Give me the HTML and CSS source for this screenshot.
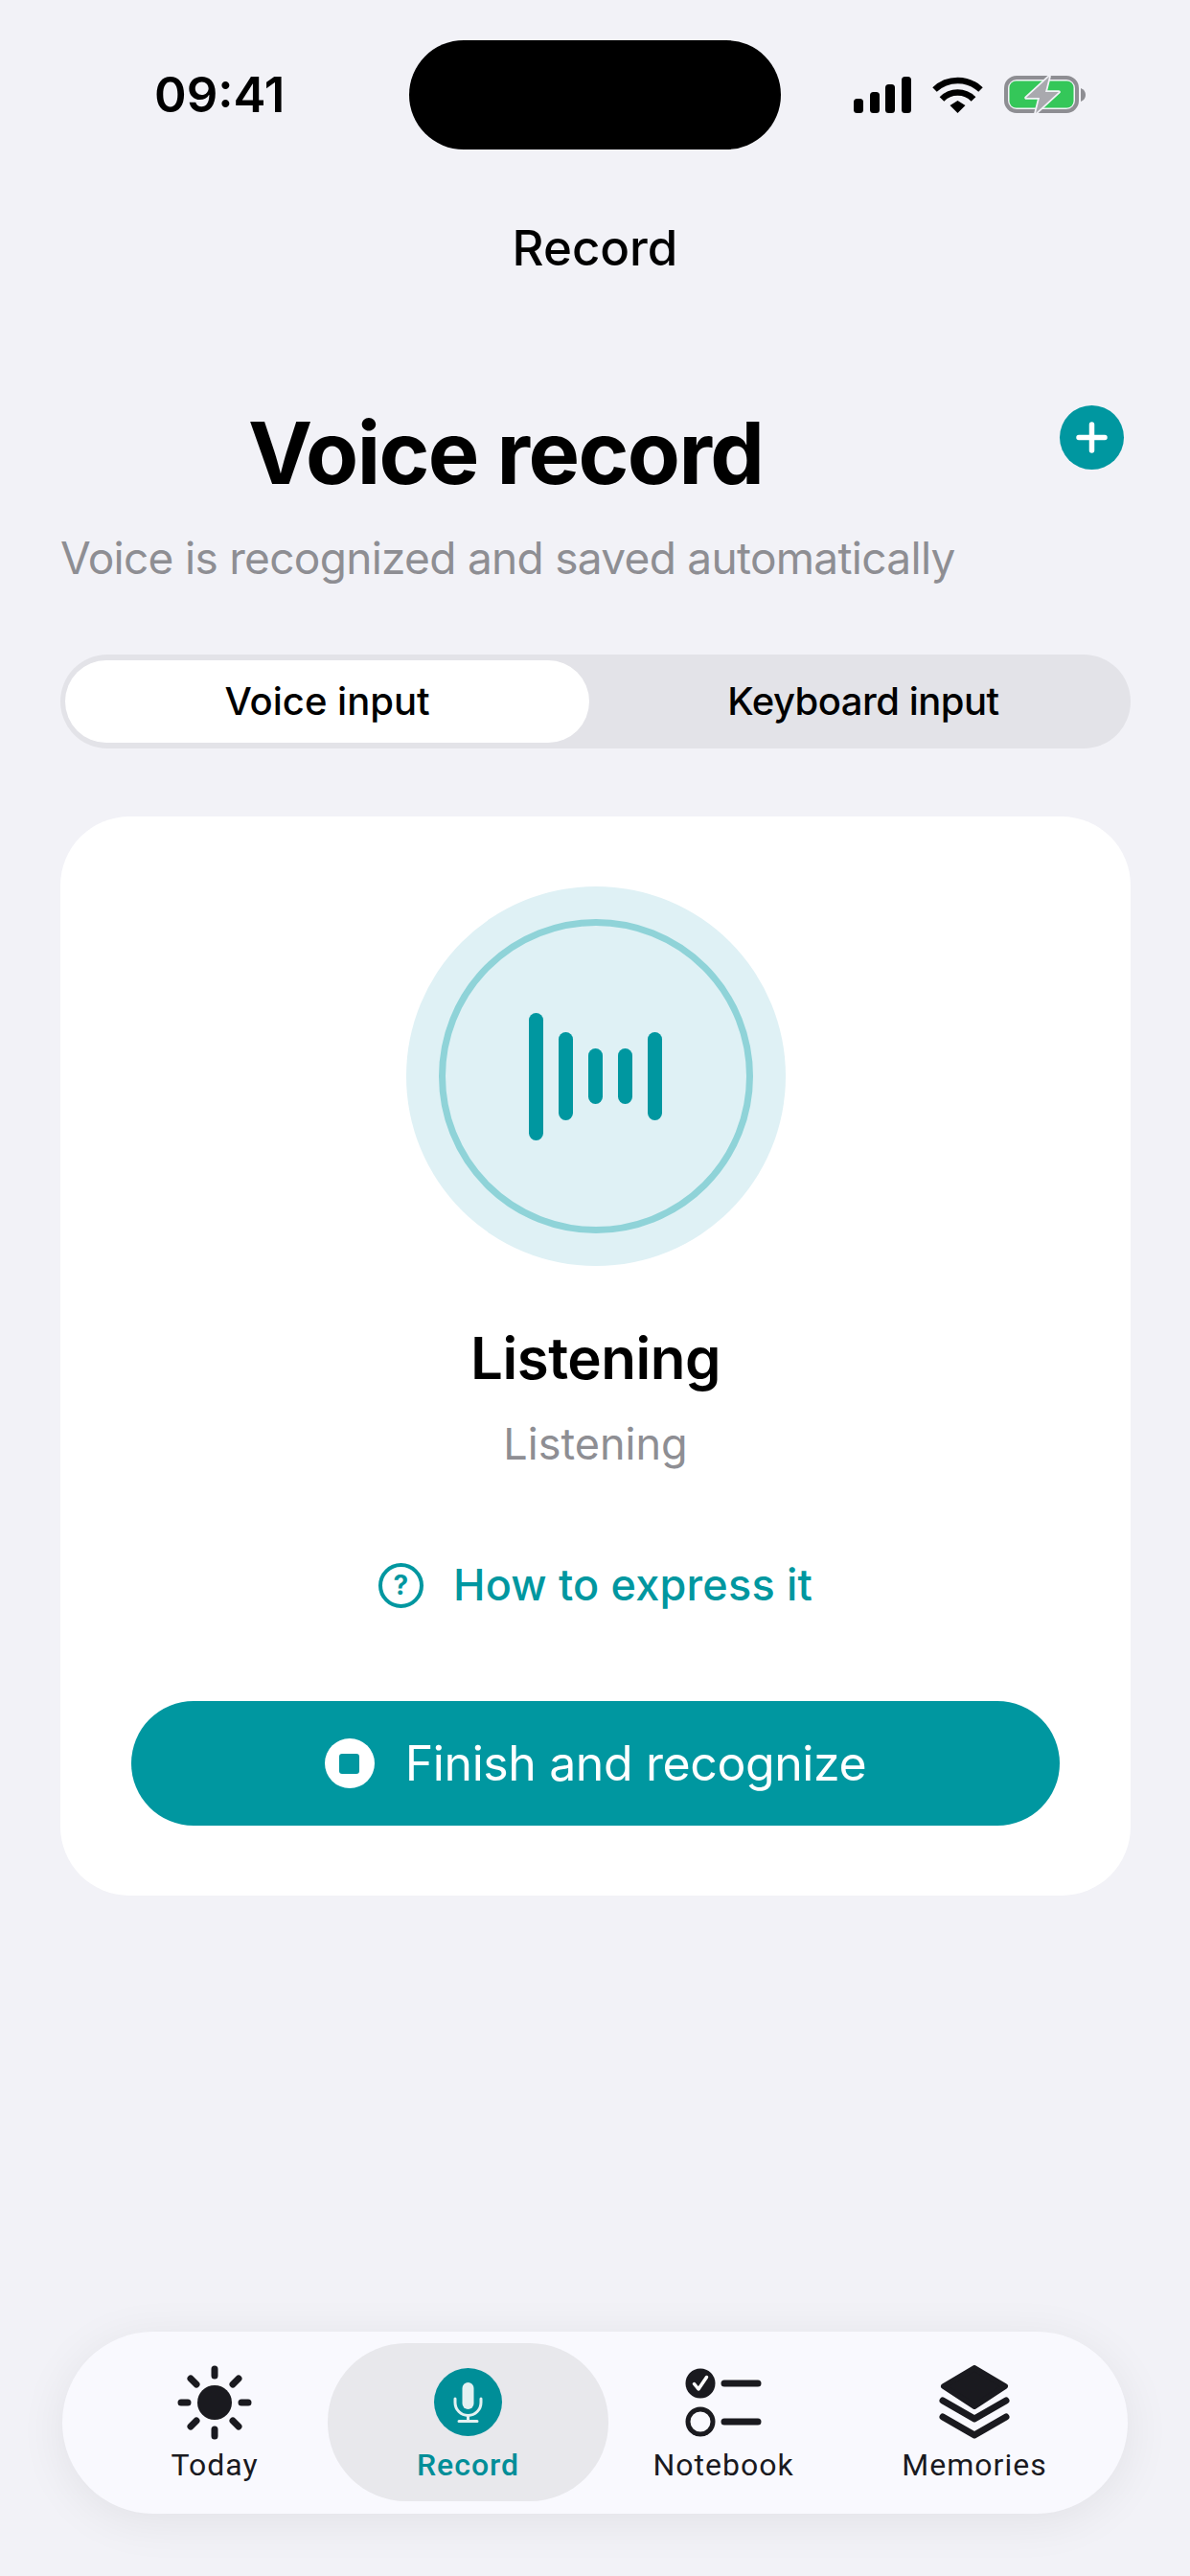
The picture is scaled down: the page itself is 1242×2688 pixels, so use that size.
FILE: index.html
```html
<!DOCTYPE html>
<html lang="en">

<head>
    <meta charset="UTF-8">
    <meta name="viewport" content="width=device-width, initial-scale=1.0">
    <title>Record</title>
    <link rel="stylesheet" href="styles.css">
</head>

<body>
    <div class="page">
        <div class="status-bar">
            <div class="status-time">09:41</div>
            <div class="island"></div>
            <div class="status-icons">
                <svg width="60" height="38" viewBox="0 0 60 38" fill="#000">
                    <rect x="0" y="23" width="10" height="15" rx="3.5" />
                    <rect x="17" y="16" width="10" height="22" rx="3.5" />
                    <rect x="33" y="8" width="10" height="30" rx="3.5" />
                    <rect x="50" y="0" width="10" height="38" rx="3.5" />
                </svg>
                <svg width="53" height="38" viewBox="0 0 53 38" fill="none" stroke="#000" stroke-width="6.5">
                    <path d="M2.5 13.5 A35 35 0 0 1 50.5 13.5" />
                    <path d="M10 23.5 A23 23 0 0 1 43 23.5" />
                    <path d="M18.5 30 L26.5 25 L34.5 30 L26.5 38 Z" fill="#000" stroke="none" />
                </svg>
                <svg width="85" height="40" viewBox="0 0 85 40">
                    <rect x="2" y="2" width="74" height="35" rx="11" fill="none" stroke="#8e8e93" stroke-width="4" />
                    <rect x="5.5" y="5.5" width="67" height="28" rx="7" fill="#34c759" />
                    <path d="M80 13 Q85 15 85 20 Q85 25 80 27 Z" fill="#8e8e93" />
                    <path d="M47 1 L23 23 L37 23 L33 39 L57 17 L43 17 Z" fill="#a9a9ae" stroke="#f2f2f7" stroke-width="3.5" stroke-linejoin="round" paint-order="stroke" />
                </svg>
            </div>
        </div>

        <div class="nav-title">Record</div>

        <div class="header-row">
            <h1>Voice record</h1>
            <div class="add-btn">
                <svg width="37" height="37" viewBox="0 0 37 37" stroke="#fff" stroke-width="5.5" stroke-linecap="round">
                    <path d="M18.5 5 V32 M5 18.5 H32" />
                </svg>
            </div>
        </div>
        <p class="subtitle">Voice is recognized and saved automatically</p>

        <div class="segment">
            <div class="segment-item active">Voice input</div>
            <div class="segment-item">Keyboard input</div>
        </div>

        <div class="card">
            <div class="pulse">
                <div class="pulse-ring">
                    <div class="bar bar-xl"></div>
                    <div class="bar bar-l"></div>
                    <div class="bar bar-s"></div>
                    <div class="bar bar-s"></div>
                    <div class="bar bar-l"></div>
                </div>
            </div>
            <div class="state-title">Listening</div>
            <div class="state-sub">Listening</div>
            <div class="help-link">
                <span class="help-icon">?</span>
                <span>How to express it</span>
            </div>
            <div class="finish-btn">
                <span class="stop-icon"><span class="stop-square"></span></span>
                <span>Finish and recognize</span>
            </div>
        </div>

        <div class="tab-bar">
            <div class="tab">
                <svg class="tab-icon" width="80" height="78" viewBox="0 0 80 78" fill="none" stroke="#1a1a1f" stroke-width="7" stroke-linecap="round">
                    <circle cx="40" cy="39" r="18" fill="#1a1a1f" stroke="none" />
                    <path d="M40 4 V11 M40 67 V74 M5 39 H12 M68 39 H75" />
                    <path d="M15 14 L21 20 M65 14 L59 20 M15 64 L21 58 M65 64 L59 58" />
                </svg>
                <span>Today</span>
            </div>
            <div class="tab active">
                <div class="mic-badge">
                    <svg width="71" height="71" viewBox="0 0 71 71" fill="none" stroke="#e3f1f2" stroke-width="3" stroke-linecap="round">
                        <rect x="29.5" y="15" width="12" height="28" rx="6" fill="#e3f1f2" stroke="none" />
                        <path d="M22 32 V36 A13.5 13.5 0 0 0 49 36 V32" />
                        <path d="M35.5 50 V55 M26 55.5 H45" />
                    </svg>
                </div>
                <span>Record</span>
            </div>
            <div class="tab">
                <svg class="tab-icon" width="80" height="78" viewBox="0 0 80 78" fill="none">
                    <circle cx="16" cy="19" r="15.5" fill="#1a1a1f" />
                    <path d="M9.5 19.5 L14 25 L22.5 12.5" stroke="#fff" stroke-width="3.5" stroke-linecap="round" stroke-linejoin="round" />
                    <path d="M41 19 H76 M41 59 H76" stroke="#1a1a1f" stroke-width="7" stroke-linecap="round" />
                    <circle cx="16" cy="59" r="13" stroke="#1a1a1f" stroke-width="5" />
                </svg>
                <span>Notebook</span>
            </div>
            <div class="tab">
                <svg class="tab-icon" width="80" height="78" viewBox="0 0 80 78" fill="none">
                    <path d="M40 3 L72 22 L40 43 L8 22 Z" fill="#1a1a1f" stroke="#1a1a1f" stroke-width="6" stroke-linejoin="round" />
                    <path d="M7 41 L40 60 L73 41 M7 58 L40 77 L73 58" stroke="#1a1a1f" stroke-width="7" stroke-linecap="round" stroke-linejoin="round" transform="translate(0 -4)" />
                </svg>
                <span>Memories</span>
            </div>
        </div>
    </div>
</body>

</html>
```

FILE: styles.css
```css
* {
    margin: 0;
    padding: 0;
    box-sizing: border-box;
}

body {
    font-family: Inter, 'Liberation Sans', sans-serif;
    background-color: #f2f2f7;
    color: #000;
    overflow: hidden;
}

.page {
    width: 1242px;
    height: 2688px;
    display: flex;
    flex-direction: column;
}

.status-bar {
    display: grid;
    grid-template-columns: 427px 388px 1fr;
    align-items: center;
    padding-top: 42px;
}

.status-time {
    padding-left: 161px;
    font-size: 51px;
    font-weight: 600;
    line-height: 60px;
}

.island {
    height: 114px;
    background-color: #000;
    border-radius: 57px;
}

.status-icons {
    display: flex;
    align-items: center;
    gap: 22px;
    padding-left: 76px;
}

.nav-title {
    margin-top: 73px;
    text-align: center;
    font-size: 51px;
    font-weight: 500;
    line-height: 60px;
}

.header-row {
    display: flex;
    justify-content: space-between;
    margin-top: 134px;
    padding: 0 69px 0 259px;
}

h1 {
    font-size: 90px;
    font-weight: 700;
    line-height: 100px;
    letter-spacing: -1.6px;
}

.add-btn {
    width: 67px;
    height: 67px;
    border-radius: 50%;
    background-color: #0097a0;
    display: flex;
    align-items: center;
    justify-content: center;
}

.subtitle {
    margin: 31px 63px 0;
    font-size: 46px;
    line-height: 56px;
    letter-spacing: -0.7px;
    color: #8e8e93;
}

.segment {
    display: grid;
    grid-template-columns: 547px 1fr;
    align-items: center;
    height: 98px;
    margin: 73px 62px 0 63px;
    padding: 6px 5px;
    background-color: #e3e3e8;
    border-radius: 49px;
}

.segment-item {
    padding-left: 12px;
    text-align: center;
    font-size: 40px;
    font-weight: 500;
    line-height: 86px;
    letter-spacing: -0.5px;
}

.segment-item.active {
    padding-left: 0;
    letter-spacing: 0;
    background-color: #fff;
    border-radius: 43px;
}

.card {
    display: flex;
    flex-direction: column;
    align-items: center;
    height: 1126px;
    margin: 71px 62px 0 63px;
    padding-top: 73px;
    background-color: #fff;
    border-radius: 72px;
}

.pulse {
    width: 396px;
    height: 396px;
    border-radius: 50%;
    background-color: #dff1f5;
    display: flex;
    align-items: center;
    justify-content: center;
}

.pulse-ring {
    width: 328px;
    height: 328px;
    border: 7px solid #8fd3d8;
    border-radius: 50%;
    display: flex;
    align-items: center;
    justify-content: center;
    gap: 16px;
}

.bar {
    width: 15px;
    background-color: #0097a0;
    border-radius: 8px;
}

.bar-xl {
    height: 133px;
}

.bar-l {
    height: 92px;
}

.bar-s {
    height: 58px;
}

.state-title {
    margin-top: 60px;
    font-size: 60px;
    font-weight: 600;
    line-height: 72px;
    letter-spacing: -0.5px;
}

.state-sub {
    margin-top: 26px;
    font-size: 45px;
    line-height: 56px;
    color: #8e8e93;
}

.help-link {
    display: flex;
    align-items: center;
    gap: 31px;
    margin-top: 91px;
    font-size: 45px;
    font-weight: 450;
    line-height: 56px;
    letter-spacing: 0.2px;
    color: #0097a0;
}

.help-icon {
    width: 47px;
    height: 47px;
    border: 4px solid #0097a0;
    border-radius: 50%;
    display: flex;
    align-items: center;
    justify-content: center;
    font-size: 28px;
    font-weight: 700;
    line-height: 1;
}

.finish-btn {
    display: flex;
    align-items: center;
    justify-content: center;
    gap: 32px;
    width: 969px;
    height: 130px;
    margin-top: 93px;
    background-color: #0097a0;
    border-radius: 65px;
    color: #fff;
    font-size: 50px;
    letter-spacing: -0.4px;
}

.stop-icon {
    width: 52px;
    height: 52px;
    background-color: #fff;
    border-radius: 50%;
    display: flex;
    align-items: center;
    justify-content: center;
}

.stop-square {
    width: 21px;
    height: 21px;
    background-color: #0097a0;
    border-radius: 3px;
}

.tab-bar {
    display: grid;
    grid-template-columns: 236px 293px 240px 284px;
    height: 190px;
    margin: auto 65px 65px;
    padding: 12px 0 13px 41px;
    background-color: #f9f9fe;
    border-radius: 95px;
    box-shadow: 0 8px 50px rgba(0, 0, 0, 0.07);
}

.tab {
    display: flex;
    flex-direction: column;
    align-items: center;
    font-family: Roboto, Inter, sans-serif;
    font-size: 32px;
    line-height: 38px;
    letter-spacing: 1px;
    color: #1a1a1f;
    padding-top: 23px;
}

.tab span {
    margin-top: 7px;
}

.tab-icon {
    display: block;
}

.tab.active {
    background-color: #e8e8ec;
    border-radius: 82px;
    font-weight: 500;
    color: #008e98;
}

.mic-badge {
    width: 71px;
    height: 71px;
    margin: 3px 0 4px;
    border-radius: 50%;
    background-color: #008e98;
}
```
